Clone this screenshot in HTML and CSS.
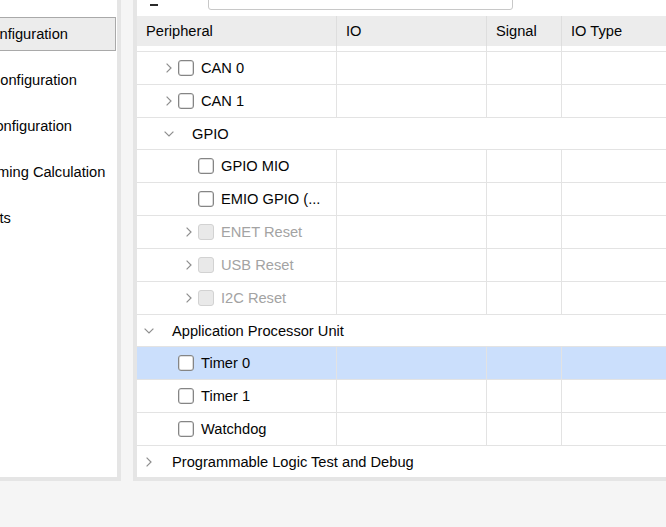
FILE: index.html
```html
<!DOCTYPE html>
<html>
<head>
<meta charset="utf-8">
<link rel="stylesheet" href="styles.css">
</head>
<body>
<div class="app">
  <nav class="nav">
    <ul class="nav-list">
      <li class="nav-item is-selected">MIO Configuration</li>
      <li class="nav-item">Clock Configuration</li>
      <li class="nav-item">DDR Configuration</li>
      <li class="nav-item">SMC Timing Calculation</li>
      <li class="nav-item">Interrupts</li>
    </ul>
  </nav>
  <section class="panel">
    <div class="toolbar">
      <span class="collapse-icon"></span>
      <div class="search">
        <svg class="search-icon" width="14" height="14" viewBox="0 0 14 14"><circle cx="5.5" cy="5.5" r="4.2" fill="none" stroke="#8a8a8a" stroke-width="1.3"/><path d="M8.6 8.6 L12.5 12.5" stroke="#8a8a8a" stroke-width="1.5"/></svg>
      </div>
    </div>
    <div class="table">
      <div class="row head">
        <div class="cell c-periph">Peripheral</div>
        <div class="cell c-io">IO</div>
        <div class="cell c-sig">Signal</div>
        <div class="cell c-type">IO Type</div>
      </div>
      <div class="row strip">
        <div class="cell c-periph"></div><div class="cell c-io"></div><div class="cell c-sig"></div><div class="cell c-type"></div>
      </div>

      <div class="row">
        <div class="cell c-periph tree lvl1"><span class="tog"><svg width="6" height="10" viewBox="0 0 6 10"><path d="M0.6 0.6 L5 5 L0.6 9.4" fill="none" stroke="#8e8e8e" stroke-width="1.2"/></svg></span><span class="cb"></span><span class="lbl">CAN 0</span></div>
        <div class="cell c-io"></div><div class="cell c-sig"></div><div class="cell c-type"></div>
      </div>
      <div class="row">
        <div class="cell c-periph tree lvl1"><span class="tog"><svg width="6" height="10" viewBox="0 0 6 10"><path d="M0.6 0.6 L5 5 L0.6 9.4" fill="none" stroke="#8e8e8e" stroke-width="1.2"/></svg></span><span class="cb"></span><span class="lbl">CAN 1</span></div>
        <div class="cell c-io"></div><div class="cell c-sig"></div><div class="cell c-type"></div>
      </div>
      <div class="row group">
        <div class="cell tree lvl1"><span class="tog"><svg width="10" height="6" viewBox="0 0 10 6"><path d="M0.6 0.6 L5 5 L9.4 0.6" fill="none" stroke="#8e8e8e" stroke-width="1.2"/></svg></span><span class="lbl lbl-group">GPIO</span></div>
      </div>
      <div class="row">
        <div class="cell c-periph tree lvl2"><span class="tog"></span><span class="cb"></span><span class="lbl">GPIO MIO</span></div>
        <div class="cell c-io"></div><div class="cell c-sig"></div><div class="cell c-type"></div>
      </div>
      <div class="row">
        <div class="cell c-periph tree lvl2"><span class="tog"></span><span class="cb"></span><span class="lbl">EMIO GPIO (...</span></div>
        <div class="cell c-io"></div><div class="cell c-sig"></div><div class="cell c-type"></div>
      </div>
      <div class="row is-disabled">
        <div class="cell c-periph tree lvl2"><span class="tog"><svg width="6" height="10" viewBox="0 0 6 10"><path d="M0.6 0.6 L5 5 L0.6 9.4" fill="none" stroke="#8e8e8e" stroke-width="1.2"/></svg></span><span class="cb"></span><span class="lbl">ENET Reset</span></div>
        <div class="cell c-io"></div><div class="cell c-sig"></div><div class="cell c-type"></div>
      </div>
      <div class="row is-disabled">
        <div class="cell c-periph tree lvl2"><span class="tog"><svg width="6" height="10" viewBox="0 0 6 10"><path d="M0.6 0.6 L5 5 L0.6 9.4" fill="none" stroke="#8e8e8e" stroke-width="1.2"/></svg></span><span class="cb"></span><span class="lbl">USB Reset</span></div>
        <div class="cell c-io"></div><div class="cell c-sig"></div><div class="cell c-type"></div>
      </div>
      <div class="row is-disabled">
        <div class="cell c-periph tree lvl2"><span class="tog"><svg width="6" height="10" viewBox="0 0 6 10"><path d="M0.6 0.6 L5 5 L0.6 9.4" fill="none" stroke="#8e8e8e" stroke-width="1.2"/></svg></span><span class="cb"></span><span class="lbl">I2C Reset</span></div>
        <div class="cell c-io"></div><div class="cell c-sig"></div><div class="cell c-type"></div>
      </div>
      <div class="row group">
        <div class="cell tree lvl0"><span class="tog"><svg width="10" height="6" viewBox="0 0 10 6"><path d="M0.6 0.6 L5 5 L9.4 0.6" fill="none" stroke="#8e8e8e" stroke-width="1.2"/></svg></span><span class="lbl lbl-group">Application Processor Unit</span></div>
      </div>
      <div class="row is-selected">
        <div class="cell c-periph tree lvl1"><span class="tog"></span><span class="cb"></span><span class="lbl">Timer 0</span></div>
        <div class="cell c-io"></div><div class="cell c-sig"></div><div class="cell c-type"></div>
      </div>
      <div class="row">
        <div class="cell c-periph tree lvl1"><span class="tog"></span><span class="cb"></span><span class="lbl">Timer 1</span></div>
        <div class="cell c-io"></div><div class="cell c-sig"></div><div class="cell c-type"></div>
      </div>
      <div class="row">
        <div class="cell c-periph tree lvl1"><span class="tog"></span><span class="cb"></span><span class="lbl">Watchdog</span></div>
        <div class="cell c-io"></div><div class="cell c-sig"></div><div class="cell c-type"></div>
      </div>
      <div class="row group last">
        <div class="cell tree lvl0"><span class="tog"><svg width="6" height="10" viewBox="0 0 6 10"><path d="M0.6 0.6 L5 5 L0.6 9.4" fill="none" stroke="#8e8e8e" stroke-width="1.2"/></svg></span><span class="lbl lbl-group">Programmable Logic Test and Debug</span></div>
      </div>
    </div>
  </section>
</div>
</body>
</html>
```

FILE: styles.css
```css
html, body {
  margin: 0;
  padding: 0;
}
body {
  background: #f5f5f5;
  font-family: "Liberation Sans", Arial, sans-serif;
  font-size: 14.67px;
  color: #050505;
  overflow: hidden;
  width: 666px;
  height: 527px;
}
.app {
  display: flex;
  gap: 12px;
  align-items: flex-start;
}

/* left navigator */
.nav {
  flex: none;
  width: 177px;
  height: 477px;
  margin-left: -60px;
  background: #fff;
  border-right: 4px solid #e5e5e5;
  border-bottom: 4px solid #e5e5e5;
  overflow: hidden;
}
.nav-list {
  list-style: none;
  margin: 0;
  padding: 17px 1px 0 0;
  display: flex;
  flex-direction: column;
  gap: 12px;
}
.nav-item {
  height: 34px;
  box-sizing: border-box;
  display: flex;
  align-items: center;
  padding-left: 8px;
  border: 1px solid transparent;
  white-space: nowrap;
}
.nav-item.is-selected {
  background: #ececec;
  border-color: #a9a9a9;
}

/* right panel */
.panel {
  flex: 1;
  min-width: 0;
  height: 477px;
  background: #fff;
  border-left: 4px solid #e5e5e5;
  border-bottom: 4px solid #e5e5e5;
  overflow: hidden;
  display: flex;
  flex-direction: column;
}
.toolbar {
  flex: none;
  height: 16px;
  display: flex;
  align-items: flex-start;
}
.collapse-icon {
  display: block;
  width: 8px;
  height: 2px;
  margin: 4px 0 0 13px;
  background: #2a2a2a;
}
.search {
  position: relative;
  width: 305px;
  height: 24px;
  margin: -14px 0 0 50px;
  box-sizing: border-box;
  border: 1px solid #c8c8c8;
  border-radius: 3px;
  background: #fff;
}
.search-icon {
  position: absolute;
  left: 12px;
  top: 0;
}

.table {
  flex: 1;
  display: flex;
  flex-direction: column;
}
.row {
  flex: none;
  display: flex;
  height: 32.83px;
  box-sizing: border-box;
  border-bottom: 1px solid #e3e3e3;
}
.row.head {
  height: 30px;
  background: #ececec;
  border-bottom: none;
}
.row.strip {
  height: 6px;
}
.row.last {
  border-bottom: none;
}
.row.is-selected {
  background: #cbdffc;
}
.cell {
  box-sizing: border-box;
  display: flex;
  align-items: center;
  border-right: 1px solid #e3e3e3;
  white-space: nowrap;
  overflow: hidden;
}
.head .cell {
  padding-left: 9px;
  border-right-color: #dedede;
}
.c-periph { width: 200px; flex: none; }
.c-io { width: 150px; flex: none; }
.c-sig { width: 75px; flex: none; }
.c-type { flex: 1; border-right: none; }
.group .cell {
  flex: 1;
  border-right: none;
}

/* tree */
.tree.lvl0 { padding-left: 2px; }
.tree.lvl1 { padding-left: 22px; }
.tree.lvl2 { padding-left: 42px; }
.tog {
  flex: none;
  width: 19px;
  height: 16px;
  display: flex;
  align-items: center;
  justify-content: center;
}
.tog svg { display: block; }
.cb {
  flex: none;
  width: 16px;
  height: 16px;
  box-sizing: border-box;
  border: 1px solid #858585;
  box-shadow: inset 0 0 0 0.6px rgba(133, 133, 133, 0.5);
  border-radius: 3px;
  background: #fff;
}
.lbl {
  margin-left: 7px;
}
.lbl-group {
  margin-left: 14px;
}
.is-disabled .cb {
  background: #e9e9e9;
  border-color: #d2d2d2;
  box-shadow: none;
}
.is-disabled .lbl {
  color: #a3a3a3;
}
```
